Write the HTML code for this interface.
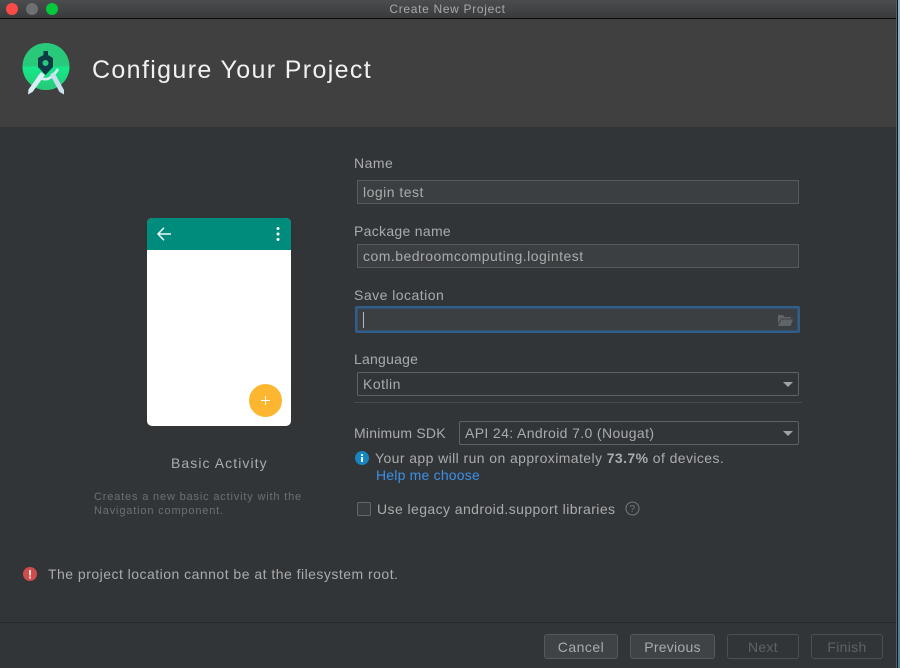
<!DOCTYPE html>
<html><head><meta charset="utf-8"><style>
*{box-sizing:border-box}
html,body{margin:0;padding:0;width:900px;height:668px;overflow:hidden;background:#323538}
body{position:relative;font-family:"Liberation Sans",sans-serif;color:#a9abad;font-size:14px;letter-spacing:.48px}
.a{position:absolute;white-space:nowrap}
.f{position:absolute;left:357px;width:442px;height:24px;background:#3c3f41;border:1px solid #5a5c5c}
.c{position:absolute;height:24px;border:1px solid #5f6264;border-radius:2px;background:#323538}
.t{position:absolute;line-height:16px;white-space:nowrap}
.b{position:absolute;top:634px;height:25px;border:1px solid #55585a;border-radius:3px;background:#3f4345;text-align:center;line-height:24px;color:#a9abad;font-weight:400}
.d{background:#323538;color:#5f6163;border-color:#4d5052}
.ar{position:absolute;width:0;height:0;border-left:5px solid transparent;border-right:5px solid transparent;border-top:5px solid #a0a2a4}
</style></head><body>
<div class="a" style="left:0;top:0;width:900px;height:18px;background:linear-gradient(#4b4d4f,#393b3d)"></div>
<div class="a" style="left:0;top:18px;width:900px;height:1px;background:#0c0c0c"></div>
<div class="a" style="left:6px;top:3px;width:12px;height:12px;border-radius:50%;background:#fc4a46"></div>
<div class="a" style="left:26px;top:3px;width:12px;height:12px;border-radius:50%;background:#6e6f71"></div>
<div class="a" style="left:46px;top:3px;width:12px;height:12px;border-radius:50%;background:#05c83c"></div>
<div class="t" style="left:0;width:895px;top:1px;text-align:center;font-size:12px;letter-spacing:.68px;color:#a8a9aa">Create New Project</div>
<div class="a" style="left:0;top:19px;width:900px;height:108px;background:#404040"></div>

<svg class="a" style="left:20px;top:41px" width="52" height="56" viewBox="0 0 52 56">
<defs><linearGradient id="g" x1="0" y1="0" x2="0" y2="1"><stop offset="0" stop-color="#14ea8a"/><stop offset="1" stop-color="#28c878"/></linearGradient></defs>
<circle cx="26" cy="25.5" r="23.5" fill="#29c97c"/>
<path d="M2.5 25.500h47a23.500 23.500 0 0 1-47 0z" fill="url(#g)"/>
<path d="M18 35Q28 44 38 28" fill="none" stroke="#d9edf5" stroke-width="2.6"/>
<path d="M21 31l4 3L12.500 51 8 53.500l.5-5z" fill="#dcedf5"/>
<path d="M30 33.500l4-2.500L44 49v4.500L39.500 51z" fill="#c8e0ec"/>
<path d="M23.500 10h4.500v4l5 3v9l-7.500 8L18 26v-9l5.500-3z" fill="#0d3a45"/>
<circle cx="25.500" cy="22" r="3" fill="#29c97c"/>
</svg>
<div class="t" style="left:92px;top:56px;line-height:28px;font-size:25px;letter-spacing:1.36px;color:#f1f1f1">Configure Your Project</div>

<div class="a" style="left:147px;top:218px;width:144px;height:208px;background:#fff;border-radius:5px;overflow:hidden">
<div style="position:absolute;left:0;top:0;width:144px;height:32px;background:#008c7c"></div>
</div>
<svg class="a" style="left:155px;top:226px" width="18" height="16" viewBox="0 0 18 16"><path d="M3 8h13M9 1.800L3 8l6 6.200" fill="none" stroke="#eefaf8" stroke-width="1.500"/></svg>
<svg class="a" style="left:274px;top:226px" width="8" height="16" viewBox="0 0 8 16"><circle cx="4" cy="2.500" r="1.500" fill="#fff"/><circle cx="4" cy="8" r="1.500" fill="#fff"/><circle cx="4" cy="13.500" r="1.500" fill="#fff"/></svg>
<div class="a" style="left:249px;top:384px;width:33px;height:33px;border-radius:50%;background:#fdb62f"></div>
<svg class="a" style="left:260px;top:395px" width="11" height="11" viewBox="0 0 11 11"><path d="M5.500 1v9M1 5.500h9" stroke="#fff" stroke-width="1"/></svg>

<div class="t" style="left:171px;top:455px;letter-spacing:1.07px">Basic Activity</div>
<div class="t" style="left:94px;top:490px;font-size:11px;line-height:14px;letter-spacing:.83px;color:#6d6f71">Creates a new basic activity with the<br>Navigation component.</div>

<div class="t" style="left:354px;top:155px">Name</div>
<div class="f" style="top:180px"></div>
<div class="t" style="left:363px;top:184px">login test</div>
<div class="t" style="left:354px;top:223px;letter-spacing:.3px">Package name</div>
<div class="f" style="top:244px"></div>
<div class="t" style="left:363px;top:248px">com.bedroomcomputing.logintest</div>
<div class="t" style="left:354px;top:287px">Save location</div>
<div class="f" style="left:355px;top:306px;width:445px;height:27px;border:2px solid #2f5f88;border-radius:2px;background:#3c3f41;box-shadow:inset 0 0 0 1px #35506a"></div>
<div class="a" style="left:363px;top:312px;width:1px;height:16px;background:#b5b7b9"></div>
<svg class="a" style="left:777px;top:314px" width="16" height="13" viewBox="0 0 16 13"><path d="M1 1h5l1.500 2H14v1.500H4L1 10z" fill="#5f6466"/><path d="M4.500 5.500H16L13.500 12H1z" fill="#5f6466"/></svg>

<div class="t" style="left:354px;top:351px;letter-spacing:.23px">Language</div>
<div class="c" style="left:357px;top:372px;width:442px"></div>
<div class="t" style="left:363px;top:376px">Kotlin</div>
<div class="ar" style="left:783px;top:382px"></div>
<div class="a" style="left:354px;top:402px;width:448px;height:1px;background:#47494b"></div>

<div class="t" style="left:354px;top:425px;letter-spacing:.21px">Minimum SDK</div>
<div class="c" style="left:459px;top:421px;width:340px"></div>
<div class="t" style="left:465px;top:425px;letter-spacing:.37px">API 24: Android 7.0 (Nougat)</div>
<div class="ar" style="left:783px;top:431px"></div>

<svg class="a" style="left:355px;top:451px" width="14" height="14" viewBox="0 0 14 14"><circle cx="7" cy="7" r="7" fill="#1685c0"/><rect x="6" y="6" width="2" height="5" fill="#e8f3f9"/><rect x="6" y="3" width="2" height="2" fill="#e8f3f9"/></svg>
<div class="t" style="left:375px;top:450px;letter-spacing:.41px">Your app will run on approximately <b style="font-weight:700">73.7%</b> of devices.</div>
<div class="t" style="left:376px;top:467px;letter-spacing:.2px;color:#3d8fe6">Help me choose</div>

<div class="a" style="left:357px;top:502px;width:14px;height:14px;border:1px solid #63666a;border-radius:2px;background:#3a3d3f"></div>
<div class="t" style="left:377px;top:501px;letter-spacing:.42px">Use legacy android.support libraries</div>
<svg class="a" style="left:625px;top:501px" width="15" height="15" viewBox="0 0 15 15"><circle cx="7.500" cy="7.500" r="6.500" fill="none" stroke="#76797b"/><text x="7.500" y="11" text-anchor="middle" font-family="Liberation Sans" font-size="10" fill="#76797b">?</text></svg>

<svg class="a" style="left:23px;top:567px" width="14" height="14" viewBox="0 0 14 14"><circle cx="7" cy="7" r="7" fill="#cf4c4d"/><rect x="6" y="3" width="2" height="5.500" fill="#f3dede"/><rect x="6" y="9.500" width="2" height="2" fill="#f3dede"/></svg>
<div class="t" style="left:48px;top:566px">The project location cannot be at the filesystem root.</div>

<div class="a" style="left:0;top:622px;width:900px;height:1px;background:#26282a"></div>
<div class="b" style="left:544px;width:74px">Cancel</div>
<div class="b" style="left:630px;width:85px;letter-spacing:.25px">Previous</div>
<div class="b d" style="left:727px;width:72px;letter-spacing:.3px">Next</div>
<div class="b d" style="left:811px;width:72px;letter-spacing:.3px">Finish</div>
<div class="a" style="left:896px;top:0;width:1px;height:668px;background:#5a5c5e"></div>
<div class="a" style="left:897px;top:0;width:1px;height:668px;background:#141516"></div>
<div class="a" style="left:898px;top:0;width:2px;height:668px;background:linear-gradient(#8fb6d0,#4a7f9c)"></div>
</body></html>
